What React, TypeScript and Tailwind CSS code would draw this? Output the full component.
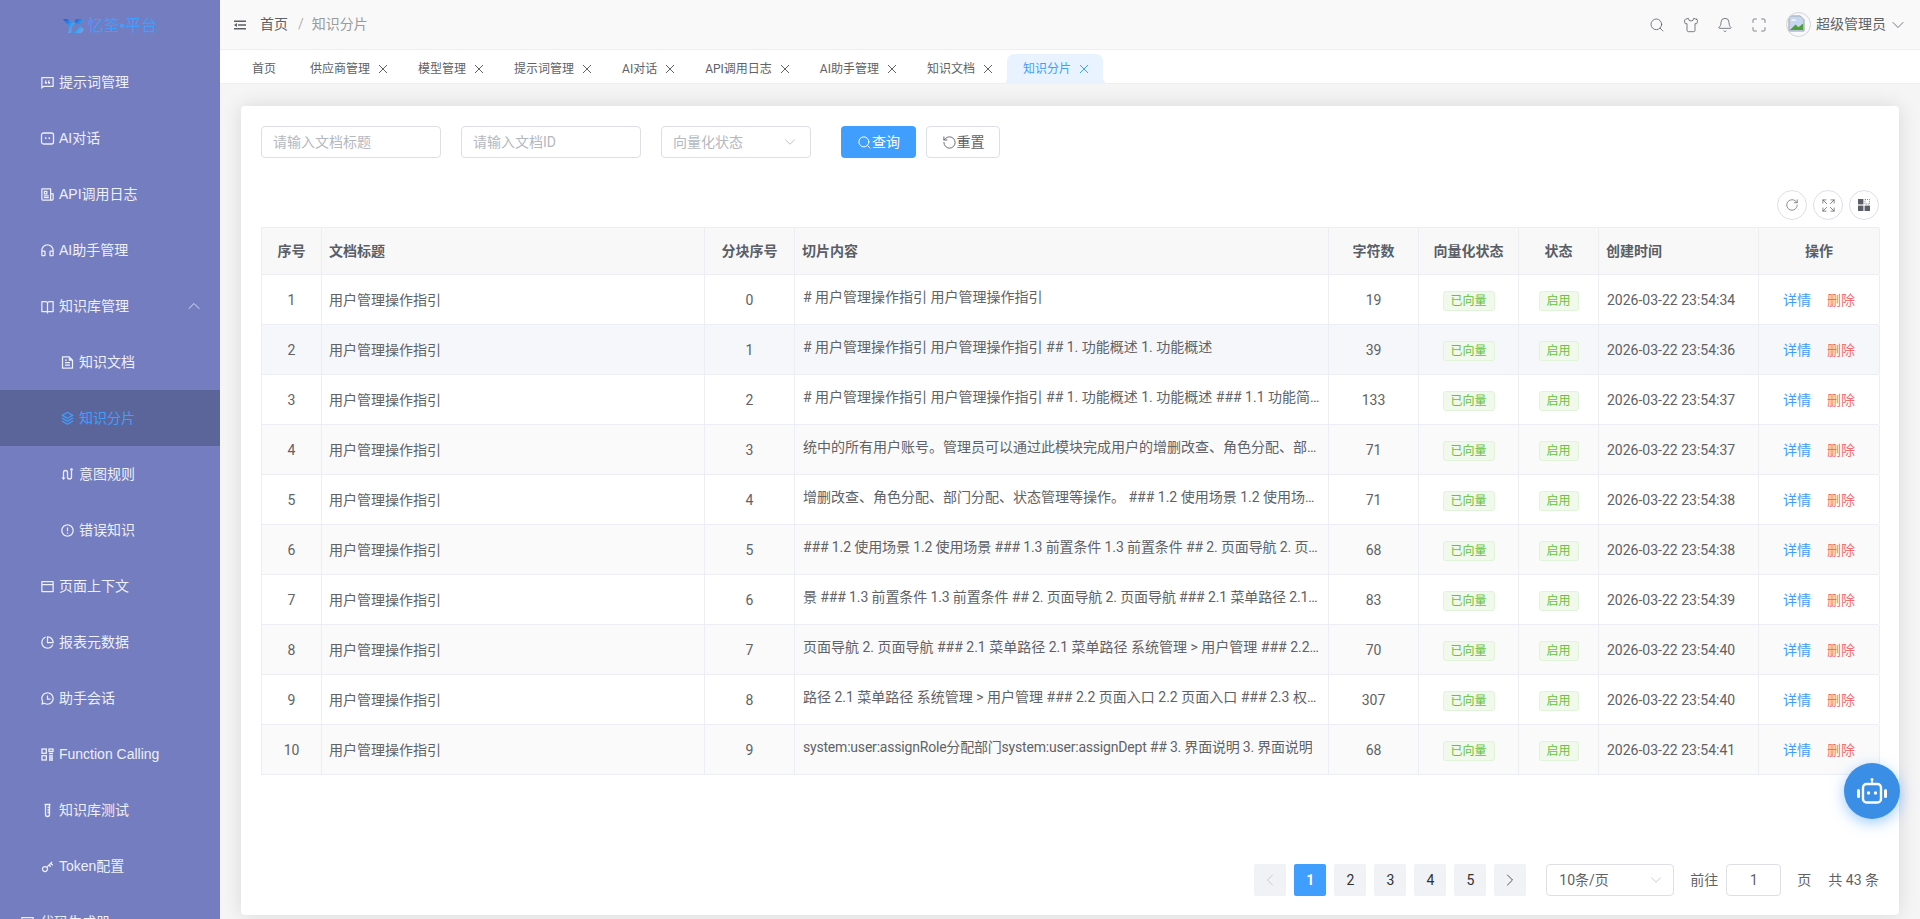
import {
  RiBookOpenLine,
  RiChatHistoryLine,
  RiChatQuoteLine,
  RiCodeBoxLine,
  RiErrorWarningLine,
  RiFileTextLine,
  RiHeadphoneLine,
  RiKey2Line,
  RiLayoutTopLine,
  RiNewspaperLine,
  RiPieChartLine,
  RiStackLine,
} from 'react-icons/ri';
import {
  Bell,
  ChevronDown,
  ChevronLeft,
  ChevronRight,
  ChevronUp,
  Expand,
  Maximize,
  RotateCcw,
  RotateCw,
  Search,
  Shirt,
} from 'lucide-react';

const sans = 'font-["Liberation_Sans","Noto_Sans_CJK_SC",sans-serif]';
const tableFont = 'font-["Roboto","Noto_Sans_CJK_SC",sans-serif]';

function ChatDotsIcon({ size, className }: { size: number; className?: string }) {
  return (
    <svg width={size} height={size} viewBox="0 0 15 15" className={className} fill="none" stroke="currentColor">
      <path d="M3.5 2h8a2 2 0 0 1 2 2v7a2 2 0 0 1-2 2h-8a2 2 0 0 1-2-2V4a2 2 0 0 1 2-2z" strokeWidth="1.3" />
      <circle cx="5.7" cy="7.2" r="0.9" fill="currentColor" stroke="none" />
      <circle cx="9.3" cy="7.2" r="0.9" fill="currentColor" stroke="none" />
    </svg>
  );
}

function RouteIcon({ size, className }: { size: number; className?: string }) {
  return (
    <svg width={size} height={size} viewBox="0 0 15 15" className={className} fill="none" stroke="currentColor" strokeWidth="1.3">
      <path d="M3.5 11V5.5a2 2 0 0 1 4 0v4.5a2 2 0 0 0 4 0V3.5" />
      <path d="M1.5 10.5h4L3.5 13z" fill="currentColor" stroke="none" />
      <circle cx="11.5" cy="2.5" r="1.3" fill="currentColor" stroke="none" />
    </svg>
  );
}

function FunctionIcon({ size, className }: { size: number; className?: string }) {
  return (
    <svg width={size} height={size} viewBox="0 0 15 15" className={className} fill="none" stroke="currentColor" strokeWidth="1.3">
      <rect x="2" y="2" width="4.3" height="4.3" />
      <rect x="2" y="8.7" width="4.3" height="4.3" />
      <rect x="9" y="2" width="4" height="2.4" />
      <path d="M9 6.5h4M9 9h4M9 11h4M9 13h4" />
    </svg>
  );
}

function TubeIcon({ size, className }: { size: number; className?: string }) {
  return (
    <svg width={size} height={size} viewBox="0 0 15 15" className={className} fill="none" stroke="currentColor" strokeWidth="1.3">
      <path d="M4.5 1.5h6M5.5 1.5v10a2 2 0 0 0 4 0v-10" />
      <path d="M7.5 4.5h2M7.5 7h2M7.5 9.5h2" />
    </svg>
  );
}

const menu = [
  { label: '提示词管理', icon: RiChatQuoteLine },
  { label: 'AI对话', icon: ChatDotsIcon },
  { label: 'API调用日志', icon: RiNewspaperLine },
  { label: 'AI助手管理', icon: RiHeadphoneLine },
  { label: '知识库管理', icon: RiBookOpenLine, open: true },
  { label: '知识文档', icon: RiFileTextLine, sub: true },
  { label: '知识分片', icon: RiStackLine, sub: true, active: true },
  { label: '意图规则', icon: RouteIcon, sub: true },
  { label: '错误知识', icon: RiErrorWarningLine, sub: true },
  { label: '页面上下文', icon: RiLayoutTopLine },
  { label: '报表元数据', icon: RiPieChartLine },
  { label: '助手会话', icon: RiChatHistoryLine },
  { label: 'Function Calling', icon: FunctionIcon },
  { label: '知识库测试', icon: TubeIcon },
  { label: 'Token配置', icon: RiKey2Line },
];

const tabs = ['供应商管理', '模型管理', '提示词管理', 'AI对话', 'API调用日志', 'AI助手管理', '知识文档'];

const rows = [
  ['0', '# 用户管理操作指引 用户管理操作指引', '19', '2026-03-22 23:54:34', ''],
  ['1', '# 用户管理操作指引 用户管理操作指引 ## 1. 功能概述 1. 功能概述', '39', '2026-03-22 23:54:36', ''],
  ['2', '# 用户管理操作指引 用户管理操作指引 ## 1. 功能概述 1. 功能概述 ### 1.1 功能简介 1.1 功能简介 用户管理模块', '133', '2026-03-22 23:54:37', ''],
  ['3', '统中的所有用户账号。管理员可以通过此模块完成用户的增删改查、角色分配、部门分配、状态管理等操作。', '71', '2026-03-22 23:54:37', ''],
  ['4', '增删改查、角色分配、部门分配、状态管理等操作。 ### 1.2 使用场景 1.2 使用场景 ### 1.3 前置条件', '71', '2026-03-22 23:54:38', ''],
  ['5', '### 1.2 使用场景 1.2 使用场景 ### 1.3 前置条件 1.3 前置条件 ## 2. 页面导航 2. 页面导航 ### 2.1', '68', '2026-03-22 23:54:38', 'tracking-[-0.12px]'],
  ['6', '景 ### 1.3 前置条件 1.3 前置条件 ## 2. 页面导航 2. 页面导航 ### 2.1 菜单路径 2.1 菜单路径', '83', '2026-03-22 23:54:39', 'tracking-[-0.12px]'],
  ['7', '页面导航 2. 页面导航 ### 2.1 菜单路径 2.1 菜单路径 系统管理 > 用户管理 ### 2.2 页面入口 2.2', '70', '2026-03-22 23:54:40', ''],
  ['8', '路径 2.1 菜单路径 系统管理 > 用户管理 ### 2.2 页面入口 2.2 页面入口 ### 2.3 权限要求 2.3', '307', '2026-03-22 23:54:40', ''],
  ['9', 'system:user:assignRole分配部门system:user:assignDept ## 3. 界面说明 3. 界面说明', '68', '2026-03-22 23:54:41', 'tracking-[-0.2px]'],
];

const cols = [
  { title: '序号', w: 'w-[60px]', center: true },
  { title: '文档标题', w: 'w-[383px]' },
  { title: '分块序号', w: 'w-[90px]', center: true },
  { title: '切片内容', w: 'w-[534px]' },
  { title: '字符数', w: 'w-[90px]', center: true },
  { title: '向量化状态', w: 'w-[100px]', center: true },
  { title: '状态', w: 'w-[80px]', center: true },
  { title: '创建时间', w: 'w-[160px]' },
  { title: '操作', w: 'w-[121px]', center: true },
];

function Logo() {
  return (
    <div className="flex h-[54px] items-center justify-center pb-[2px]">
      <svg width="21" height="15" viewBox="0 0 21 15" className="mr-[4px]">
        <defs>
          <linearGradient id="lg" x1="0" y1="0" x2="1" y2="1">
            <stop offset="0" stopColor="#2a4fd0" />
            <stop offset="0.55" stopColor="#2aa6f2" />
            <stop offset="1" stopColor="#a09ae0" />
          </linearGradient>
        </defs>
        <path d="M0 0h5l3.5 4.5L10 2l2 2-3 4-1 6H5l1.5-6z" fill="url(#lg)" />
        <path d="M21 0h-8l-1.5 3 6 4-7 7h8l2.5-4-5-3.5 2-3.5h2z" fill="url(#lg)" />
      </svg>
      <span className={`${sans} text-[16px] text-[#409eff]`}>忆筌•平台</span>
    </div>
  );
}

function Sidebar() {
  return (
    <aside className={`${sans} h-[919px] w-[220px] shrink-0 overflow-hidden bg-[#737dbf] text-[14px] text-[#eef0f8]`}>
      <Logo />
      {menu.map((m) => {
        const Icon = m.icon;
        return (
          <div
            key={m.label}
            className={`flex h-[56px] items-center ${m.sub ? 'pl-[60px]' : 'pl-[40px]'} ${m.active ? 'bg-[#5c6599] text-[#409eff]' : ''}`}
          >
            <Icon size={15} className="mr-[4px] shrink-0" />
            <span>{m.label}</span>
            {m.open && <ChevronUp size={20} strokeWidth={1} className="mr-[16px] ml-auto" />}
          </div>
        );
      })}
      <div className="flex h-[56px] items-center pl-[20px]">
        <RiCodeBoxLine size={15} className="mr-[5px]" />
        <span>代码生成器</span>
      </div>
    </aside>
  );
}

function Header() {
  return (
    <header className="flex h-[50px] items-center border-b border-[#eeeeee] bg-[#f9f9f9] pr-[12px] pl-[14px] text-[14px]">
      <svg width="12" height="10" viewBox="0 0 12 10" className="mr-[14px]">
        <path d="M0 0.5h12v1.5H0zM4 4.2h8v1.5H4zM0 8h12v1.5H0zM3 3L0 5l3 2z" fill="#5a5e66" />
      </svg>
      <span className="text-[#606266]">首页</span>
      <span className="mr-[8px] ml-[10px] text-[#b4b4b4]">/</span>
      <span className="text-[#9a9a9a]">知识分片</span>
      <div className="ml-auto flex items-center text-[#5a5e66]">
        <Search size={16} strokeWidth={1.2} />
        <Shirt size={16} strokeWidth={1.2} className="ml-[18px]" />
        <Bell size={16} strokeWidth={1.2} className="ml-[18px]" />
        <Maximize size={16} strokeWidth={1.2} className="ml-[18px]" />
        <div className="relative ml-[19px] h-[25px] w-[25px] overflow-hidden rounded-full border border-[#d4d6da]">
          <svg width="17" height="17" viewBox="0 0 18 18" className="absolute top-[2px] left-[1px]">
            <path d="M1 1h12l4 4v12H1z" fill="#c7d7f0" stroke="#9aa0a6" />
            <path d="M2 16l6-6 3 3 5-4v7z" fill="#4ea13a" />
            <path d="M3 6q3-3 6 0z" fill="#fff" />
          </svg>
        </div>
        <span className="ml-[5px] text-[#606266]">超级管理员</span>
        <ChevronDown size={20} strokeWidth={1} className="ml-[2px]" />
      </div>
    </header>
  );
}

function CloseMark({ className }: { className?: string }) {
  return (
    <svg width="10" height="10" viewBox="0 0 10 10" className={className} fill="none" stroke="currentColor" strokeWidth="1">
      <path d="M1 1l8 8M9 1l-8 8" />
    </svg>
  );
}

function TabBar() {
  return (
    <div className="flex h-[34px] items-end border-b border-[#eeeeee] bg-white pl-[15px] text-[12px] text-[#606266]">
      <div className="mb-[-1px] flex h-[30px] items-center px-[17px]">首页</div>
      {tabs.map((t) => (
        <div key={t} className="mb-[-1px] flex h-[30px] items-center pr-[13px] pl-[17px]">
          <span>{t}</span>
          <CloseMark className="ml-[8px] text-[#5f6368]" />
        </div>
      ))}
      <div className="relative mb-[-1px] flex h-[30px] items-center pr-[13px] pl-[17px] text-[#409eff]">
        <svg width="103" height="30" viewBox="0 0 103 30" className="absolute top-0 left-[-2px]">
          <path d="M0 30Q3 28 3 22V8Q3 0 11 0H91Q99 0 99 8V22Q99 28 103 30Z" fill="#e8f3ff" />
        </svg>
        <span className="relative">知识分片</span>
        <CloseMark className="relative ml-[8px]" />
      </div>
    </div>
  );
}

function Filters() {
  const box = 'flex h-[32px] items-center rounded-[4px] border border-[#dcdfe6] bg-white px-[11px] text-[14px] text-[#b4b8c0]';
  return (
    <div className="flex items-center">
      <div className={`${box} w-[180px]`}>请输入文档标题</div>
      <div className={`${box} ml-[20px] w-[180px]`}>请输入文档ID</div>
      <div className={`${box} ml-[20px] w-[150px] justify-between`}>
        向量化状态
        <ChevronDown size={18} strokeWidth={1} className="text-[#a8acb4]" />
      </div>
      <button className="ml-[30px] flex h-[32px] w-[75px] items-center justify-center rounded-[4px] bg-[#409eff] text-[14px] text-white">
        <Search size={15} strokeWidth={1.6} />
        查询
      </button>
      <button className="ml-[10px] flex h-[32px] w-[74px] items-center justify-center rounded-[4px] border border-[#dcdfe6] bg-white text-[14px] text-[#606266]">
        <RotateCcw size={15} strokeWidth={1.5} />
        重置
      </button>
    </div>
  );
}

function RoundBtn({ children }: { children: React.ReactNode }) {
  return (
    <div className="ml-[6px] flex h-[30px] w-[30px] items-center justify-center rounded-full border border-[#dcdfe6] bg-white text-[#606266]">
      {children}
    </div>
  );
}

function GridMark() {
  return (
    <svg width="12" height="12" viewBox="0 0 12 12" fill="#5a5e66">
      <rect x="0" y="0" width="5.4" height="5.4" />
      <rect x="0" y="6.6" width="5.4" height="5.4" />
      <rect x="6.6" y="6.6" width="5.4" height="5.4" />
      <rect x="7" y="0.4" width="4.6" height="4.6" fill="none" stroke="#5a5e66" strokeWidth="0.8" strokeDasharray="1 1" />
    </svg>
  );
}

function Table() {
  return (
    <div className={`${tableFont} border-t border-l border-[#ebeef5] text-[14px] text-[#606266]`}>
      <div className="flex h-[47px] border-b border-[#ebeef5] bg-[#f8f8f9] font-bold text-[#5a5e66]">
        {cols.map((c) => (
          <div
            key={c.title}
            className={`${c.w} flex shrink-0 items-center border-r border-[#ebeef5] px-[7px] ${c.center ? 'justify-center' : ''}`}
          >
            {c.title}
          </div>
        ))}
      </div>
      {rows.map((r, i) => (
        <div
          key={r[0]}
          className={`flex h-[50px] border-b border-[#ebeef5] ${i === 1 ? 'bg-[#f5f7fa]' : i % 2 === 1 ? 'bg-[#fafafa]' : 'bg-white'}`}
        >
          <div className="flex w-[60px] shrink-0 items-center justify-center border-r border-[#ebeef5] pt-[1px]">{i + 1}</div>
          <div className="flex w-[383px] shrink-0 items-center border-r border-[#ebeef5] px-[7px] pt-[1px]">用户管理操作指引</div>
          <div className="flex w-[90px] shrink-0 items-center justify-center border-r border-[#ebeef5] pt-[1px]">{r[0]}</div>
          <div className="flex w-[534px] shrink-0 items-center border-r border-[#ebeef5] px-[8px] pb-[4px]">
            <span className={`truncate ${r[4]}`}>{r[1]}</span>
          </div>
          <div className="flex w-[90px] shrink-0 items-center justify-center border-r border-[#ebeef5] pt-[1px]">{r[2]}</div>
          <div className="flex w-[100px] shrink-0 items-center justify-center border-r border-[#ebeef5] pt-[3px]">
            <span className="flex h-[20px] w-[52px] items-center justify-center rounded-[3px] border border-[#e1f3d8] bg-[#f0f9eb] text-[12px] text-[#67c23a]">已向量</span>
          </div>
          <div className="flex w-[80px] shrink-0 items-center justify-center border-r border-[#ebeef5] pt-[3px]">
            <span className="flex h-[20px] w-[40px] items-center justify-center rounded-[3px] border border-[#e1f3d8] bg-[#f0f9eb] text-[12px] text-[#67c23a]">启用</span>
          </div>
          <div className="flex w-[160px] shrink-0 items-center border-r border-[#ebeef5] px-[8px] pt-[1px]">{r[3]}</div>
          <div className="flex w-[121px] shrink-0 items-center justify-center gap-[16px] border-r border-[#ebeef5] pt-[1px]">
            <span className="text-[#409eff]">详情</span>
            <span className="text-[#f56c6c]">删除</span>
          </div>
        </div>
      ))}
    </div>
  );
}

function Pagination() {
  const page = 'flex h-[32px] w-[32px] items-center justify-center rounded-[2px] bg-[#f0f2f5]';
  return (
    <div className={`${tableFont} flex items-center justify-end text-[14px] text-[#303133]`}>
      <div className={`${page} text-[#c0c4cc]`}>
        <ChevronLeft size={20} strokeWidth={1} />
      </div>
      <div className="ml-[8px] flex h-[32px] w-[32px] items-center justify-center rounded-[2px] bg-[#409eff] font-bold text-white">1</div>
      {[2, 3, 4, 5].map((n) => (
        <div key={n} className={`${page} ml-[8px]`}>{n}</div>
      ))}
      <div className={`${page} ml-[8px]`}>
        <ChevronRight size={20} strokeWidth={1} />
      </div>
      <div className="ml-[20px] flex h-[32px] w-[128px] items-center justify-between rounded-[4px] border border-[#dcdfe6] pr-[8px] pl-[12px] text-[#606266]">
        10条/页
        <ChevronDown size={18} strokeWidth={1} className="text-[#b4b8c0]" />
      </div>
      <span className="ml-[16px] text-[#606266]">前往</span>
      <div className="ml-[8px] flex h-[32px] w-[55px] items-center justify-center rounded-[4px] border border-[#dcdfe6] text-[#606266]">1</div>
      <span className="ml-[16px] text-[#606266]">页</span>
      <span className="ml-[17px] text-[#606266]">共 43 条</span>
    </div>
  );
}

function RobotButton() {
  return (
    <div className="absolute top-[763px] left-[1844px] flex h-[56px] w-[56px] items-center justify-center rounded-full bg-[#3a8ee6] shadow-[0_4px_14px_rgba(64,158,255,0.5)]">
      <svg width="30" height="26" viewBox="0 0 30 26" fill="none">
        <circle cx="15" cy="1.6" r="1.5" fill="#fff" />
        <path d="M15 2v4" stroke="#fff" strokeWidth="1.6" />
        <rect x="6" y="6" width="18" height="18.5" rx="3.5" stroke="#fff" strokeWidth="2.4" />
        <rect x="0" y="11" width="3" height="9" rx="1.5" fill="#fff" />
        <rect x="27" y="11" width="3" height="9" rx="1.5" fill="#fff" />
        <circle cx="11.5" cy="15" r="1.7" fill="#fff" />
        <circle cx="18.5" cy="15" r="1.7" fill="#fff" />
      </svg>
    </div>
  );
}

export default function App() {
  return (
    <div className={`${tableFont} relative flex h-[919px] w-[1920px] overflow-hidden bg-[#f5f5f6]`}>
      <Sidebar />
      <div className="flex min-w-0 flex-1 flex-col">
        <Header />
        <TabBar />
        <main className="flex-1 pt-[22px] pr-[21px] pl-[21px]">
          <div className="flex h-[809px] flex-col rounded-[4px] bg-white px-[20px] pt-[20px] shadow-[0_0_20px_rgba(0,0,0,0.12)]">
            <Filters />
            <div className="mt-[32px] flex justify-end">
              <RoundBtn><RotateCw size={14} strokeWidth={1.2} /></RoundBtn>
              <RoundBtn><Expand size={15} strokeWidth={1.2} /></RoundBtn>
              <RoundBtn><GridMark /></RoundBtn>
            </div>
            <div className="mt-[7px]">
              <Table />
            </div>
            <div className="mt-[89px]">
              <Pagination />
            </div>
          </div>
        </main>
      </div>
      <RobotButton />
    </div>
  );
}
